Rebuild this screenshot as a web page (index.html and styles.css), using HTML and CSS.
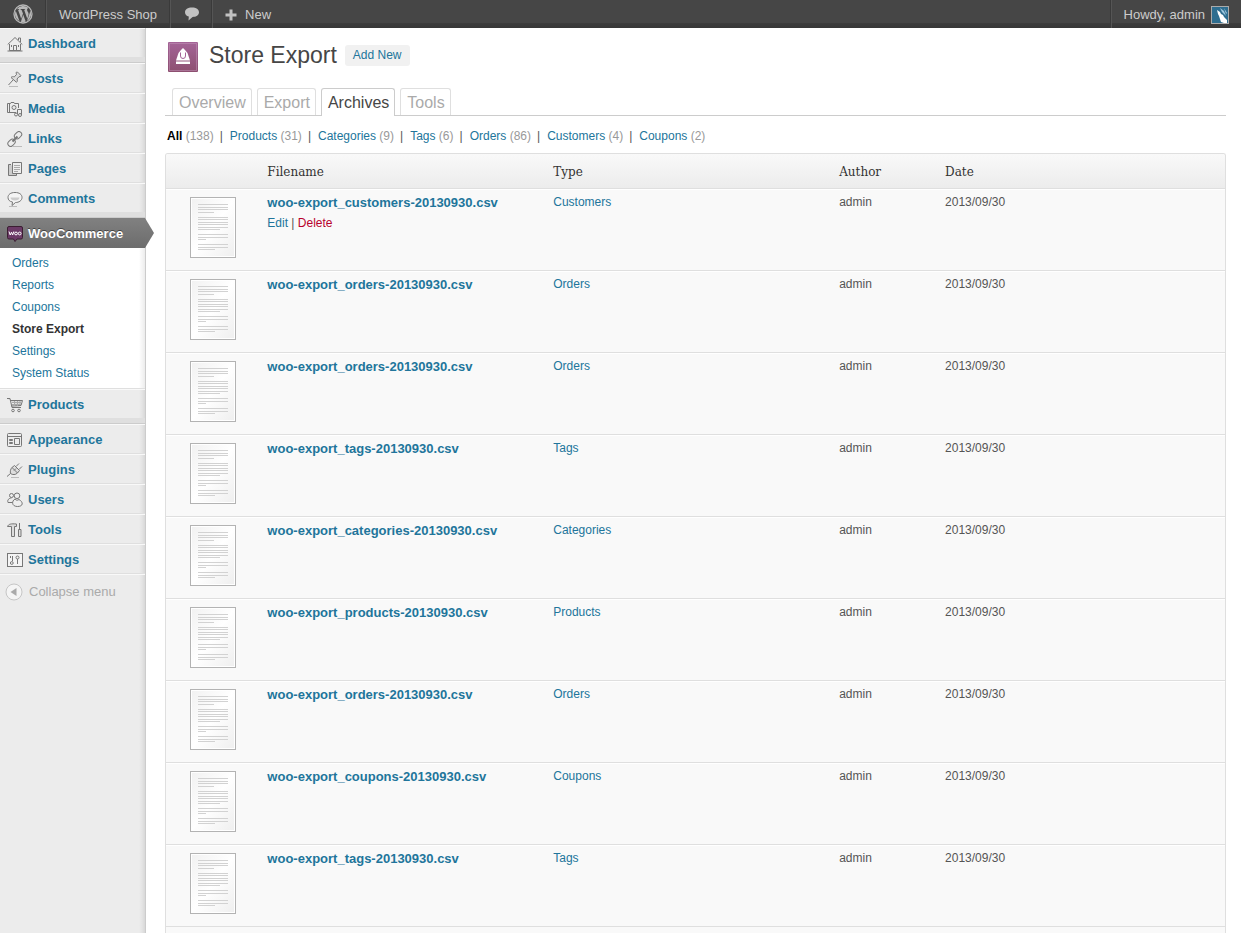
FILE: index.html
```html
<!DOCTYPE html>
<html lang="en">
<head>
<meta charset="utf-8">
<title>Store Export</title>
<link rel="stylesheet" href="styles.css">
</head>
<body>
<svg class="defs" width="0" height="0" aria-hidden="true">
  <defs>
    <linearGradient id="paper" x1="0" y1="0" x2="1" y2="1"><stop offset="0" stop-color="#f1f1f1"/><stop offset="0.5" stop-color="#ffffff"/><stop offset="1" stop-color="#eeeeee"/></linearGradient>
    <linearGradient id="plum" x1="0" y1="0" x2="0" y2="1"><stop offset="0" stop-color="#a46497"/><stop offset="1" stop-color="#8d4f70"/></linearGradient>
  </defs>
  <symbol id="document" viewBox="0 0 46 61">
    <rect x="0.5" y="0.5" width="45" height="60" fill="url(#paper)" stroke="#b3b3b3"/>
    <rect x="1.5" y="1.5" width="43" height="58" fill="none" stroke="#fff"/>
    <path d="M8 7.500h30M8 10.500h30M8 12.500h30M8 15.500h16M8 20.500h30M8 22.500h30M8 25.500h30M8 27.500h30M8 30.500h30M8 32.500h22M8 37.500h30M8 40.500h30M8 42.500h8M8 47.500h30M8 50.500h30M8 52.500h17" stroke="#d2d2d2" fill="none"/>
  </symbol>
</svg>
<div class="page">
  <header class="bar">
    <a class="bar-item bar-logo" href="#" aria-label="About WordPress">
      <svg width="20" height="20" viewBox="0 0 20 20"><circle cx="10" cy="10" r="9" fill="none" stroke="#b8b8b8" stroke-width="1.300"/><path fill="#b8b8b8" d="M2.700 6.800A8 8 0 0 0 6.500 17.200zM3.700 5.200a8 8 0 0 1 11.800-1.100c-1.600.3-1.700 2-1 3.100.8 1.300 1.500 2.300.8 4.400l-1 3.100-3.200-8.900 1-.1v-.7l-4.500.1v.7l1 .1 1.400 3.600-1.800 5.300L5.100 5.900l1-.1v-.7zM10.200 10.700 12.700 17.500A8 8 0 0 1 7.900 17.800zM17.100 6.200A8 8 0 0 1 14 16.900l2.400-6.800c.6-1.500.8-2.800.7-3.900z"/></svg>
    </a>
    <a class="bar-item" href="#">WordPress Shop</a>
    <a class="bar-item bar-comments" href="#" aria-label="Comments">
      <svg width="16" height="16" viewBox="0 0 16 16"><path fill="#c2c2c2" d="M8 1.500c4.200 0 7 1.800 7 4.800S12.200 11 8.600 11L4.500 14.500 4.800 10.500C2.400 10 1 8.500 1 6.300c0-3 2.800-4.800 7-4.800z"/></svg>
    </a>
    <a class="bar-item bar-new" href="#">
      <svg width="12" height="12" viewBox="0 0 12 12"><path fill="#c2c2c2" d="M4.500 0.500h3v4h4v3h-4v4h-3v-4h-4v-3h4z"/></svg>New</a>
    <a class="bar-item bar-user" href="#">Howdy, admin
      <svg width="18" height="18" viewBox="0 0 18 18"><rect x="0.500" y="0.500" width="17" height="17" fill="#2e6d8f" stroke="#aaa"/><path fill="#fff" d="M6 4l3 2 1 2 2 1 1 2 3 3v3h-3l-3-1-1-3-1-3-1-2z"/><path fill="#9ec7de" d="M9 2l4 3 2 5-4-4zM13 2l3 5-1 1z"/></svg>
    </a>
  </header>
  <div class="shell">
    <nav class="menu" aria-label="Main menu">
      <a class="menu-item" href="#"><svg width="16" height="16" viewBox="0 0 16 16"><path d="M2.500 8v6.500h11V8M.7 8.500 8 1.500l7.300 7M11.500 4V2h2v4M.5 15h15M6.500 14V9.500h3V14M11.500 9v2M4.500 9v2"/></svg>Dashboard</a>
      <hr class="divider">
      <a class="menu-item" href="#"><svg width="16" height="16" viewBox="0 0 16 16"><path d="M9 1.500c1-.8 2 0 3 1s2.500 2 1.500 3l-1.500.2-2 2.300c.6 1.500.4 2.500-.5 3.300L4 6.500c1-1 2-1 3.300-.6L9.500 3.500zM6 9 1.500 14" fill="#ddd"/><path d="M2 15.500h9" stroke="#bbb"/></svg>Posts</a>
      <a class="menu-item" href="#"><svg width="16" height="16" viewBox="0 0 16 16"><path d="M9 11.500H.5v-9h3l.5-1h3l.5 1h4V7M2.500 3v8"/><circle cx="7" cy="6.500" r="2"/><path d="M10.500 13V8.500h4V14"/><circle cx="9" cy="13.500" r="1.500"/><circle cx="13" cy="14" r="1.500"/></svg>Media</a>
      <a class="menu-item" href="#"><svg width="16" height="16" viewBox="0 0 16 16"><rect x="7" y="1.500" width="8" height="5.500" rx="2.700" transform="rotate(-45 11 4.200)"/><rect x=".5" y="9" width="8" height="5.500" rx="2.700" transform="rotate(-45 4.500 11.700)"/><path d="M5.500 10.500l5-5" stroke-width="2"/><path d="M6 15.500h9" stroke="#bbb"/></svg>Links</a>
      <a class="menu-item" href="#"><svg width="16" height="16" viewBox="0 0 16 16"><path d="M4 3.500H1.500v11h8V13" fill="#ccc"/><path d="M5.500 1.500h9v11h-9z" fill="#eee"/><path d="M7 4.500h6M7 6.500h6M7 8.500h6M7 10.500h4" stroke="#aaa"/></svg>Pages</a>
      <a class="menu-item" href="#"><svg width="16" height="16" viewBox="0 0 16 16"><path d="M8 1.500c4.500 0 7 2 7 5s-3 5-6.500 5L5 14.500l.5-3.500C2.500 10.500 1 8.800 1 6.500c0-3 2.500-5 7-5z" fill="#f4f4f4"/><path d="M3.500 6.500c0 2 2 3 4.500 3s4.500-1 4.500-3z" class="shade"/><path d="M2 15.500h8" stroke="#bbb"/></svg>Comments</a>
      <hr class="divider">
      <a class="menu-item current" href="#" aria-current="true"><svg width="16" height="16" viewBox="0 0 16 16"><path d="M2 .5h12q1.500 0 1.500 1.500v9.500q0 1.500-1.500 1.500h-4l-2 2.500L6.500 13H2Q.5 13 .5 11.500V2Q.5.5 2 .5z" fill="#6b3a66" stroke="#3b1e32"/><path d="M2 5.500 3.200 9 4.500 6.200 5.600 9 6.800 5.500" stroke="#fff"/><circle cx="9" cy="7.500" r="1.400" stroke="#fff"/><circle cx="12.700" cy="7.500" r="1.400" stroke="#fff"/></svg>WooCommerce</a>
      <div class="submenu">
        <a href="#">Orders</a>
        <a href="#">Reports</a>
        <a href="#">Coupons</a>
        <a class="chosen" href="#">Store Export</a>
        <a href="#">Settings</a>
        <a href="#">System Status</a>
      </div>
      <a class="menu-item" href="#"><svg width="16" height="16" viewBox="0 0 16 16"><path d="M0 1.500h3L5 10.500h9M3.500 3.500h12l-1.500 5-9.500.5" fill="#ddd"/><path d="M5 5.500h10M5 7.500h9M7.500 4v5M10.500 4v5M13 4v4" stroke="#aaa"/><circle cx="6" cy="13.500" r="1.300"/><circle cx="12" cy="13.500" r="1.300"/></svg>Products</a>
      <hr class="divider">
      <a class="menu-item" href="#"><svg width="16" height="16" viewBox="0 0 16 16"><rect x=".5" y="1.500" width="14" height="13" rx="1"/><path d="M1 4.500h13M2.500 7.500h3v1h-3zM2.500 10.500h3v1h-3zM7.500 6.500h5v6h-5z"/></svg>Appearance</a>
      <a class="menu-item" href="#"><svg width="16" height="16" viewBox="0 0 16 16"><path d="M5 5.500 10.500 11C8.500 13 5.500 13 3.500 11.500 3 9.500 3.500 7 5 5.500zM5 5.500l2.500-2L12.500 8.500 10.500 11M9 4.500 12 1.500M12 7.500l3-3M3.500 11.500 0 14.500M7 8.500l2-2" fill="#ddd"/><path d="M4 15.500h8" stroke="#bbb"/></svg>Plugins</a>
      <a class="menu-item" href="#"><svg width="16" height="16" viewBox="0 0 16 16"><circle cx="4.500" cy="3.500" r="2"/><path d="M6 10.500H1c-1-2.500 1-4.500 3.500-4.500"/><circle cx="10" cy="3.800" r="2.800" fill="#eee"/><path d="M8 7C4.500 9 4.500 14.500 10.500 14.500S16.500 10 12 7.500C10.500 8.500 9 8.500 8 7z" fill="#eee"/></svg>Users</a>
      <a class="menu-item" href="#"><svg width="16" height="16" viewBox="0 0 16 16"><path d="M.5 4.500C1.500 2 4 1.500 9.500 2v2.500h-2v10h-3v-10zM12.500 1v6M11.500 7.500h2.500v7h-2.500z" fill="#ddd"/></svg>Tools</a>
      <a class="menu-item" href="#"><svg width="16" height="16" viewBox="0 0 16 16"><rect x=".5" y="1.500" width="15" height="13" fill="#f4f4f4"/><path d="M5.500 4v5M3.500 4v2M10.500 7v5"/><circle cx="4.800" cy="11" r="1.400"/><circle cx="10.500" cy="5.500" r="1.500"/></svg>Settings</a>
      <button class="collapse" type="button"><svg width="18" height="18" viewBox="0 0 18 18"><circle cx="9" cy="9" r="8" fill="#f5f5f5" stroke="#c6c6c6"/><path d="M11.500 5v8L5.500 9z" fill="#aaa"/></svg>Collapse menu</button>
    </nav>
    <main class="content">
      <div class="heading">
        <svg width="30" height="30" viewBox="0 0 30 30"><rect width="30" height="30" rx="1" fill="url(#plum)"/><rect x="1.500" y="1.500" width="27" height="27" fill="none" stroke="#c597ba" stroke-dasharray="1 1"/><path d="M8 18.500 10.500 11 13 8l2-2 2 2 2.500 3 2.500 7.500z" fill="#fff"/><path d="M8 19.500h14v2.500H8z" fill="#fff"/><path d="M12.500 10.500v3.500a2.500 2.500 0 0 0 5 0v-3.500" fill="none" stroke="#a46497"/></svg>
        <h1>Store Export</h1>
        <a class="add" href="#">Add New</a>
      </div>
      <nav class="tabs" aria-label="Sections">
        <a href="#">Overview</a>
        <a href="#">Export</a>
        <a class="active" href="#">Archives</a>
        <a href="#">Tools</a>
      </nav>
      <ul class="filters">
        <li><a class="all" href="#">All</a> (138)</li>
        <li><a href="#">Products</a> (31)</li>
        <li><a href="#">Categories</a> (9)</li>
        <li><a href="#">Tags</a> (6)</li>
        <li><a href="#">Orders</a> (86)</li>
        <li><a href="#">Customers</a> (4)</li>
        <li><a href="#">Coupons</a> (2)</li>
      </ul>
      <div class="frame">
      <table class="archive">
        <colgroup><col class="c-icon"><col class="c-wide"><col class="c-wide"><col class="c-author"><col class="c-wide"></colgroup>
        <thead>
          <tr><th></th><th scope="col">Filename</th><th scope="col">Type</th><th scope="col">Author</th><th scope="col">Date</th></tr>
        </thead>
        <tbody>
          <tr><td><svg class="doc"><use href="#document"/></svg></td><td><a class="file" href="#">woo-export_customers-20130930.csv</a><div class="actions"><a href="#">Edit</a> | <a class="delete" href="#">Delete</a></div></td><td><a href="#">Customers</a></td><td>admin</td><td>2013/09/30</td></tr>
          <tr><td><svg class="doc"><use href="#document"/></svg></td><td><a class="file" href="#">woo-export_orders-20130930.csv</a></td><td><a href="#">Orders</a></td><td>admin</td><td>2013/09/30</td></tr>
          <tr><td><svg class="doc"><use href="#document"/></svg></td><td><a class="file" href="#">woo-export_orders-20130930.csv</a></td><td><a href="#">Orders</a></td><td>admin</td><td>2013/09/30</td></tr>
          <tr><td><svg class="doc"><use href="#document"/></svg></td><td><a class="file" href="#">woo-export_tags-20130930.csv</a></td><td><a href="#">Tags</a></td><td>admin</td><td>2013/09/30</td></tr>
          <tr><td><svg class="doc"><use href="#document"/></svg></td><td><a class="file" href="#">woo-export_categories-20130930.csv</a></td><td><a href="#">Categories</a></td><td>admin</td><td>2013/09/30</td></tr>
          <tr><td><svg class="doc"><use href="#document"/></svg></td><td><a class="file" href="#">woo-export_products-20130930.csv</a></td><td><a href="#">Products</a></td><td>admin</td><td>2013/09/30</td></tr>
          <tr><td><svg class="doc"><use href="#document"/></svg></td><td><a class="file" href="#">woo-export_orders-20130930.csv</a></td><td><a href="#">Orders</a></td><td>admin</td><td>2013/09/30</td></tr>
          <tr><td><svg class="doc"><use href="#document"/></svg></td><td><a class="file" href="#">woo-export_coupons-20130930.csv</a></td><td><a href="#">Coupons</a></td><td>admin</td><td>2013/09/30</td></tr>
          <tr><td><svg class="doc"><use href="#document"/></svg></td><td><a class="file" href="#">woo-export_tags-20130930.csv</a></td><td><a href="#">Tags</a></td><td>admin</td><td>2013/09/30</td></tr>
        </tbody>
      </table>
      </div>
    </main>
  </div>
</div>
</body>
</html>
```
FILE: styles.css
```css
* { box-sizing: border-box; }
body {
  margin: 0;
  background: #fff;
  color: #555;
  font: 12px/16px "Liberation Sans", Arial, sans-serif;
}
a { color: #21759b; text-decoration: none; }
svg { flex: none; }
.defs { display: block; height: 0; }
.page { display: flex; flex-direction: column; min-height: 100vh; }

.bar {
  display: flex;
  height: 28px;
  background: linear-gradient(#464646 0, #464646 82%, #3c3c3c 84%, #373737);
}
.bar-item {
  display: flex;
  align-items: center;
  padding: 1px 13px 0 12px;
  border-right: 1px solid #555;
  box-shadow: inset -1px 0 #3a3a3a;
  color: #ccc;
  font-size: 13px;
  line-height: 26px;
}
.bar-logo { padding: 0 13px; }
.bar-comments { padding: 0 12px 0 13px; }
.bar-new { gap: 8px; border-right: 0; box-shadow: none; }
.bar-user {
  gap: 6px;
  margin-left: auto;
  padding-right: 12px;
  border-right: 0;
  border-left: 1px solid #555;
  box-shadow: -1px 0 #3a3a3a;
}

.shell { display: flex; flex: 1; }
.menu {
  flex: none;
  width: 146px;
  border-right: 1px solid #ccc;
  background: linear-gradient(to left, #d8d8d8, #e4e4e4 3px, #ececec 6px);
}
.menu-item {
  display: flex;
  align-items: center;
  gap: 5px;
  height: 30px;
  padding: 2px 0 0 7px;
  border-top: 1px solid #f9f9f9;
  border-bottom: 1px solid #dfdfdf;
  font-size: 13px;
  font-weight: bold;
}
.menu-item svg { fill: none; stroke: #777; }
.shade { fill: #ccc; stroke: none; }
.divider {
  height: 5px;
  margin: 0;
  border: 0;
  border-bottom: 1px solid #ccc;
  background: #dfdfdf;
}
.current {
  position: relative;
  border-top-color: #808080;
  border-bottom-color: #6d6d6d;
  background: linear-gradient(#808080, #6d6d6d);
  color: #fff;
  text-shadow: 0 -1px #444;
}
.current::after {
  content: "";
  position: absolute;
  top: -1px;
  left: 100%;
  width: 9px;
  height: 30px;
  background: linear-gradient(#808080, #6d6d6d);
  clip-path: polygon(0 0, 100% 50%, 0 100%);
}
.submenu {
  display: flex;
  flex-direction: column;
  padding: 4px 0 4px 12px;
  border-bottom: 1px solid #dfdfdf;
  background: linear-gradient(to left, #ececec, #fff 6px);
  line-height: 22px;
}
.chosen { color: #333; font-weight: bold; }
.collapse {
  display: flex;
  align-items: center;
  gap: 6px;
  width: 100%;
  height: 35px;
  padding: 0 0 0 5px;
  border: 0;
  border-top: 1px solid #f9f9f9;
  background: none;
  color: #aaa;
  font: 13px/16px "Liberation Sans", Arial, sans-serif;
}

.content {
  display: flex;
  flex: 1;
  flex-direction: column;
  min-width: 0;
  padding: 11px 15px 0 19px;
}
.heading { display: flex; align-items: center; padding: 3px 0 0 3px; }
.heading h1 {
  margin: 0 8px 4px 11px;
  color: #464646;
  font-size: 23px;
  font-weight: normal;
  line-height: 26px;
}
.add {
  margin-bottom: 4px;
  padding: 3px 8px;
  border-radius: 3px;
  background: #f1f1f1;
  line-height: 15px;
}
.tabs {
  display: flex;
  gap: 5px;
  margin-top: 16px;
  padding-left: 7px;
  border-bottom: 1px solid #ccc;
}
.tabs a {
  padding: 4px 5px 2px 6px;
  border: 1px solid #dfdfdf;
  border-bottom: 0;
  border-radius: 3px 3px 0 0;
  color: #aaa;
  font-size: 16px;
  line-height: 20px;
}
.tabs .active {
  margin-bottom: -1px;
  border-color: #ccc;
  background: #fff;
  color: #464646;
}
.filters {
  display: flex;
  margin: 12px 0 9px;
  padding: 0 0 0 2px;
  list-style: none;
  color: #999;
}
.filters li + li::before { content: "|"; margin: 0 7px 0 6px; color: #555; }
.filters .all { color: #000; font-weight: bold; }

.frame {
  flex: 1;
  border: 1px solid #dfdfdf;
  border-bottom: 0;
  border-radius: 3px 3px 0 0;
  background: #f9f9f9;
  overflow: hidden;
}
.archive { width: 100%; border-collapse: separate; border-spacing: 0; table-layout: fixed; }
.c-wide { width: 27%; }
.c-author { width: 10%; }
.archive th {
  height: 35px;
  padding: 2px 6px 0;
  border-bottom: 1px solid #dfdfdf;
  background: linear-gradient(#f9f9f9, #ececec);
  color: #333;
  font: 12px/16px "DejaVu Serif", serif;
  text-align: left;
}
.archive td {
  height: 82px;
  padding: 4px 6px;
  border-top: 1px solid #fff;
  border-bottom: 1px solid #dfdfdf;
  vertical-align: top;
}
.archive td:first-child { padding: 7px 0 0 24px; }
.doc { display: block; width: 46px; height: 61px; }
.file { font-size: 13px; font-weight: bold; line-height: 18px; }
.actions { margin-top: 2px; line-height: 18px; }
.actions .delete { color: #b8002c; }
```
